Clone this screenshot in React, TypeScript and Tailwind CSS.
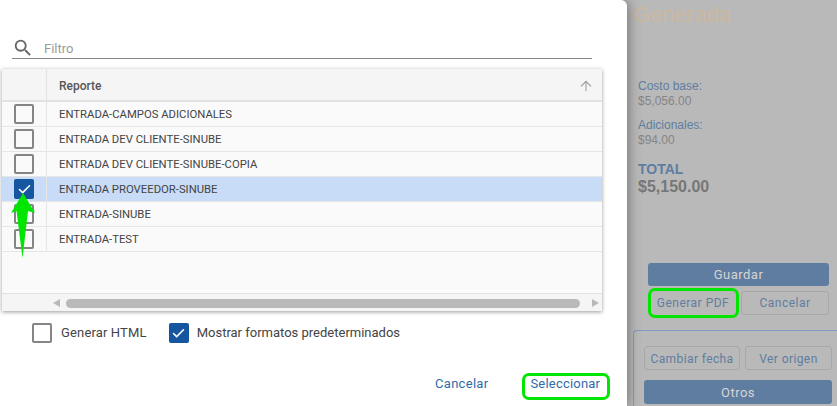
import { ArrowUp, Check } from 'lucide-react';

const reports = [
  { name: 'ENTRADA-CAMPOS ADICIONALES', checked: false },
  { name: 'ENTRADA DEV CLIENTE-SINUBE', checked: false },
  { name: 'ENTRADA DEV CLIENTE-SINUBE-COPIA', checked: false },
  { name: 'ENTRADA PROVEEDOR-SINUBE', checked: true },
  { name: 'ENTRADA-SINUBE', checked: false },
  { name: 'ENTRADA-TEST', checked: false },
];

function Checkbox({ checked }: { checked: boolean }) {
  if (checked) {
    return (
      <span className="flex h-5 w-5 items-center justify-center rounded-[2px] bg-[#14569f]">
        <Check className="h-[15px] w-[15px] text-white" strokeWidth={2.6} />
      </span>
    );
  }
  return <span className="block h-5 w-5 rounded-[2px] border-2 border-[#858585] bg-transparent" />;
}

export default function App() {
  return (
    <div className="relative flex h-[406px] w-[837px] overflow-hidden bg-[#b9b9b9] font-['Roboto',sans-serif]">
      {/* Dialog */}
      <div className="z-10 flex h-full w-[627px] shrink-0 flex-col rounded-tr-[6px] bg-white shadow-[0_0_14px_rgba(0,0,0,0.45)]">
        <div className="ml-3 mt-[38px] flex h-[21px] w-[580px] items-center border-b border-[#858585]">
          <svg className="text-[#666]" width="22" height="22" viewBox="0 0 24 24" fill="currentColor">
            <path d="M15.5 14h-.79l-.28-.27A6.471 6.471 0 0 0 16 9.5 6.5 6.5 0 1 0 9.5 16c1.61 0 3.09-.59 4.23-1.57l.27.28v.79l5 4.99L20.49 19l-4.99-5zm-6 0C7.01 14 5 11.99 5 9.5S7.01 5 9.5 5 14 7.01 14 9.5 11.99 14 9.5 14z" />
          </svg>
          <span className="ml-[10px] translate-y-[1px] text-[13px] text-[#9a9a9a]">Filtro</span>
        </div>

        <div className="ml-0.5 mt-[10px] flex h-[242px] w-[600px] flex-col bg-[#fafafa] shadow-[0_1px_4px_rgba(0,0,0,0.4)]">
          <div className="flex h-[33px] shrink-0 border-b-2 border-[#e2e2e2] bg-[#f5f5f5]">
            <div className="w-[45px] shrink-0 border-r border-[#e2e2e2]" />
            <div className="flex flex-1 items-center justify-between pl-[12px] pr-[8px] text-[12px] font-medium text-[#555]">
              <span className="translate-y-[1px]">Reporte</span>
              <ArrowUp className="h-[16px] w-[16px] translate-y-[1px] text-[#a0a0a0]" strokeWidth={1.6} />
            </div>
          </div>
          {reports.map((report) => (
            <div
              key={report.name}
              className={`flex h-[25px] shrink-0 items-center border-b border-[#e6e6e6] ${report.checked ? 'bg-[#c8dcf7]' : ''}`}
            >
              <div className="flex h-full w-[45px] shrink-0 items-center justify-center border-r border-[#e6e6e6]">
                <Checkbox checked={report.checked} />
              </div>
              <span className="translate-y-[1px] pl-[12px] text-[11.3px] text-[#444]">{report.name}</span>
            </div>
          ))}
          <div className="flex-1 border-b border-[#e2e2e2]" />
          <div className="flex h-[17px] shrink-0 items-center bg-[#f5f5f5] pl-[51px] pr-[3px] pt-[1px]">
            <span className="h-0 w-0 border-y-[4px] border-r-[7px] border-y-transparent border-r-[#b9b9b9]" />
            <span className="ml-[6px] h-[9px] flex-1 rounded-full bg-[#b9b9b9]" />
            <span className="ml-[12px] h-0 w-0 border-y-[4px] border-l-[7px] border-y-transparent border-l-[#b9b9b9]" />
          </div>
        </div>

        <div className="ml-8 mt-3 flex items-center text-[13px] text-[#444]">
          <Checkbox checked={false} />
          <span className="ml-[9px] tracking-[0.15px]">Generar HTML</span>
          <span className="ml-[22px]">
            <Checkbox checked />
          </span>
          <span className="ml-2">Mostrar formatos predeterminados</span>
        </div>

        <div className="mt-[31px] flex items-center text-[13px] tracking-[0.3px] text-[#2f6ba8]">
          <span className="ml-[435px]">Cancelar</span>
          <span className="ml-[42px] tracking-[0.2px]">Seleccionar</span>
        </div>
      </div>

      {/* Dimmed panel behind the dialog */}
      <div className="flex flex-1 flex-col pl-[6px]">
        <div className="font-['Liberation_Sans',sans-serif] text-[22px] leading-[30px] text-[#ccb8a0]">Generada</div>
        <div className="ml-[5px] mt-[49px] font-['Liberation_Sans',sans-serif] text-[12px] leading-[15px]">
          <div className="text-[#5f7da0]">Costo base:</div>
          <div className="text-[#858585]">$5,056.00</div>
          <div className="mt-[9px] text-[#5f7da0]">Adicionales:</div>
          <div className="text-[#858585]">$94.00</div>
          <div className="mt-[13px] text-[14px] leading-[17px] font-bold text-[#5f7da0]">TOTAL</div>
          <div className="text-[16px] leading-[17px] font-bold text-[#777]">$5,150.00</div>
        </div>

        <div className="ml-[15px] mt-[68px] w-[181px]">
          <div className="flex h-[23px] items-center justify-center rounded-[3px] bg-[#5f7da0] text-[13px] tracking-[0.5px] text-[#d5d5d5]">
            Guardar
          </div>
          <div className="mt-[5px] flex gap-[3px]">
            <div className="flex h-6 w-[90px] items-center justify-center rounded-[3px] text-[12px] tracking-[0.5px] text-[#5f7da0]">
              Generar PDF
            </div>
            <div className="flex h-6 flex-1 items-center justify-center rounded-[3px] border border-[#a8a8a8] text-[12px] tracking-[0.5px] text-[#5f7da0]">
              Cancelar
            </div>
          </div>
        </div>

        <div className="mt-[15px] flex-1 rounded-tl-[4px] border-l border-t border-[#7f9cc0] pl-[10px] pr-[5px] pt-[15px]">
          <div className="flex gap-[5px]">
            <div className="flex h-6 w-[96px] items-center justify-center rounded-[3px] border border-[#a8a8a8] pt-[1px] text-[12px] tracking-[0.4px] text-[#5f7da0]">
              Cambiar fecha
            </div>
            <div className="flex h-6 flex-1 items-center justify-center rounded-[3px] border border-[#a8a8a8] pt-[1px] text-[12px] tracking-[0.4px] text-[#5f7da0]">
              Ver origen
            </div>
          </div>
          <div className="mt-[10px] flex h-6 items-center justify-center rounded-[3px] bg-[#5f7da0] pt-[1px] text-[13px] tracking-[0.5px] text-[#d5d5d5]">
            Otros
          </div>
        </div>
      </div>

      {/* Green annotations over the screenshot */}
      <div className="absolute left-[522px] top-[373px] z-20 h-[27px] w-[88px] rounded-[7px] border-[3.5px] border-[#00e600]" />
      <div className="absolute left-[648px] top-[288px] z-20 h-[30px] w-[91px] rounded-[7px] border-[3.5px] border-[#00e600]" />
      <svg className="absolute left-[10px] top-[193px] z-20" width="26" height="66" viewBox="0 0 26 66">
        <path d="M13 0 L25 20 L18 18 L12.5 65 L6.5 18 L1 20 Z" fill="#00e600" />
      </svg>
    </div>
  );
}
